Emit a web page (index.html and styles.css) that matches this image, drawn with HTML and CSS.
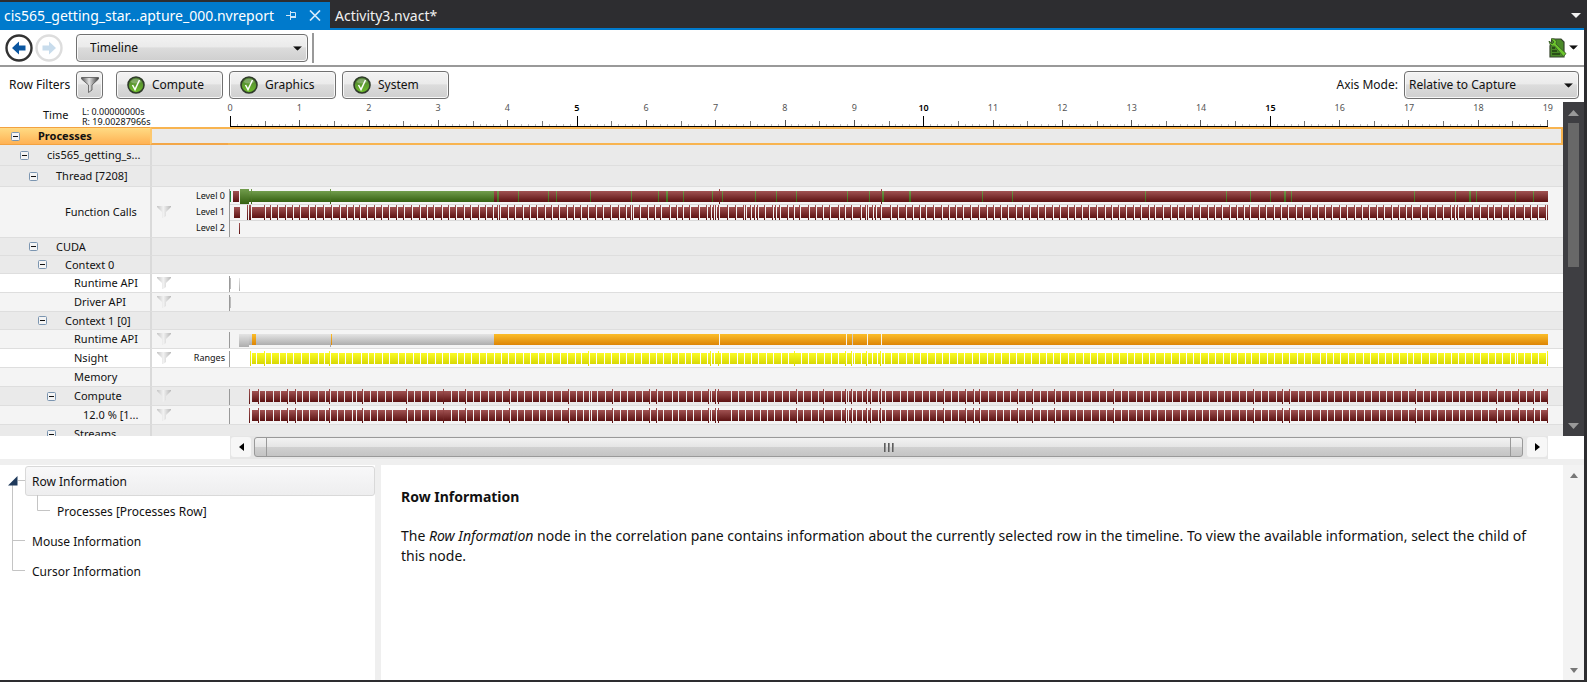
FILE: index.html
```
<!DOCTYPE html>
<html lang="en">
<head>
<meta charset="utf-8">
<title>Nsight Timeline</title>
<link rel="stylesheet" href="styles.css">
</head>
<body>
<svg class="defs" width="0" height="0" aria-hidden="true">
  <defs>
    <linearGradient id="g-red" x1="0" y1="0" x2="0" y2="1"><stop offset="0" stop-color="#a05252"/><stop offset="1" stop-color="#5c1212"/></linearGradient>
    <linearGradient id="g-green" x1="0" y1="0" x2="0" y2="1"><stop offset="0" stop-color="#729d4d"/><stop offset="1" stop-color="#356011"/></linearGradient>
    <linearGradient id="g-orange" x1="0" y1="0" x2="0" y2="1"><stop offset="0" stop-color="#fbbd28"/><stop offset="1" stop-color="#dd8506"/></linearGradient>
    <linearGradient id="g-yellow" x1="0" y1="0" x2="0" y2="1"><stop offset="0" stop-color="#fbfb24"/><stop offset="1" stop-color="#d8d804"/></linearGradient>
    <linearGradient id="g-grey" x1="0" y1="0" x2="0" y2="1"><stop offset="0" stop-color="#e4e4e4"/><stop offset="1" stop-color="#adadad"/></linearGradient>
    <linearGradient id="g-ball" x1="0" y1="0" x2="0" y2="1"><stop offset="0" stop-color="#4d7a34"/><stop offset="1" stop-color="#6fc02a"/></linearGradient>
    <linearGradient id="g-funnel" x1="0" y1="0" x2="1" y2="0"><stop offset="0" stop-color="#555"/><stop offset=".45" stop-color="#e2e2e2"/><stop offset="1" stop-color="#3c3c3c"/></linearGradient>
    <linearGradient id="g-funnel-dim" x1="0" y1="0" x2="1" y2="0"><stop offset="0" stop-color="#c4c4c4"/><stop offset=".45" stop-color="#f2f2f2"/><stop offset="1" stop-color="#b8b8b8"/></linearGradient>
    <symbol id="funnel" viewBox="0 0 14 12"><path d="M0 0H14V1L9 6V10L6 12H5V6L0 1Z" fill="url(#g-funnel-dim)"/></symbol>
    <symbol id="check" viewBox="0 0 18 18"><circle cx="9" cy="9" r="8" fill="url(#g-ball)" stroke="#2f3a2a" stroke-width="1.6"/><path d="M3.5 6a6.2 6.2 0 0 1 11 0Q9 9 3.500 6Z" fill="#fff" opacity=".25"/><path d="M5.500 9L8 13.500L12.500 4" fill="none" stroke="#fff" stroke-width="1.500"/></symbol>
    <symbol id="caret" viewBox="0 0 10 5"><path d="M0 0H10L5 5Z" fill="currentColor"/></symbol>
  </defs>
</svg>

<div class="window">
  <nav class="tabs">
    <div class="tab active">
      <a href="#report">cis565_getting_star...apture_000.nvreport</a>
      <button class="plain" aria-label="Pin tab"><svg width="11" height="9" viewBox="0 0 11 9"><path d="M0 4.500H4M4.500 0V9M4.500 1.500H9.500V6M4.500 6.500H10" fill="none" stroke="#cfe6f7" stroke-width="1"/><path d="M4.500 5.500H10" stroke="#cfe6f7" stroke-width="1"/></svg></button>
      <button class="plain close" aria-label="Close tab"><svg width="12" height="11" viewBox="0 0 12 11"><path d="M1 .5L11 10.500M11 .5L1 10.500" stroke="#d5eafa" stroke-width="1.700"/></svg></button>
    </div>
    <div class="tab"><a href="#activity">Activity3.nvact*</a></div>
    <button class="plain tab-menu" aria-label="Open documents"><svg width="10" height="5"><use href="#caret"/></svg></button>
  </nav>

  <main class="client">
    <div class="toolbar">
      <button class="plain nav" aria-label="Back"><svg width="28" height="28" viewBox="0 0 28 28"><circle cx="14" cy="14" r="12.500" fill="#fff" stroke="#333" stroke-width="2.400"/><path d="M7 14L14 7.500V11.500H20.500V16.500H14V20.500Z" fill="#0a56a0"/></svg></button>
      <button class="plain nav" aria-label="Forward" disabled><svg width="28" height="28" viewBox="0 0 28 28"><circle cx="14" cy="14" r="12.500" fill="#fff" stroke="#ddd" stroke-width="2.400"/><path d="M21 14L14 7.500V11.500H7.500V16.500H14V20.500Z" fill="#c8dcec"/></svg></button>
      <div class="select page-select">
        <select aria-label="Report page"><option>Timeline</option></select>
        <svg width="9" height="5" viewBox="0 0 10 5"><use href="#caret"/></svg>
      </div>
      <span class="divider"></span>
      <button class="plain tools" aria-label="Report tools">
        <svg width="19" height="20" viewBox="0 0 19 20"><path d="M4 1H13L16 4V19H2V8Z" fill="#4a8a28" stroke="#35452c" stroke-width="1.200"/><path d="M4 13H9M4 16H12M4 10H7" stroke="#1f3d10" stroke-width="1.300"/><path d="M1 3L4 6L6 4L3 1Q7 0 8.500 3.500L8 6L18 15.500L15.500 18.500L6.500 8Q2 9 1 3Z" fill="#6cc62c" stroke="#3b5d28" stroke-width=".9"/></svg>
        <svg width="9" height="5" viewBox="0 0 10 5"><use href="#caret"/></svg>
      </button>
    </div>

    <div class="filters">
      <span class="filters-label">Row Filters</span>
      <button class="btn funnel-btn" aria-label="Filter rows"><svg width="18" height="16" viewBox="0 0 18 16"><path d="M.5 .5H17.500V2L11 8V13L7.500 15.500V8L.5 2Z" fill="url(#g-funnel)" stroke="#555" stroke-width=".8"/></svg></button>
      <div class="filter-group">
        <button class="btn"><svg width="18" height="18"><use href="#check"/></svg>Compute</button>
        <button class="btn"><svg width="18" height="18"><use href="#check"/></svg>Graphics</button>
        <button class="btn"><svg width="18" height="18"><use href="#check"/></svg>System</button>
      </div>
      <label class="axis-label" for="axis">Axis Mode:</label>
      <div class="select axis-select">
        <select id="axis"><option>Relative to Capture</option></select>
        <svg width="9" height="5" viewBox="0 0 10 5"><use href="#caret"/></svg>
      </div>
    </div>

    <section class="timeline">
      <div class="timeline-body">
        <div class="ruler">
          <span class="time-label">Time</span>
          <span class="time-range">L: 0.00000000s<br>R: 19.00287966s</span>
          <div class="scale">
            <div class="scale-labels" id="scale-labels"></div>
            <svg class="ticks" data-track="ruler" viewBox="0 0 1319 12" preserveAspectRatio="none"></svg>
          </div>
        </div>
        <div class="rows" id="rows"></div>
      </div>
      <div class="vscroll dark">
        <button class="plain" aria-label="Scroll up"><svg width="11" height="6" viewBox="0 0 11 6"><path d="M5.500 0L11 6H0Z" fill="#999"/></svg></button>
        <span class="vthumb"></span>
        <button class="plain" aria-label="Scroll down"><svg width="11" height="6" viewBox="0 0 11 6"><path d="M5.500 6L11 0H0Z" fill="#999"/></svg></button>
      </div>
    </section>

    <div class="hscroll">
      <button class="plain hbtn" aria-label="Scroll left"><svg width="5" height="8" viewBox="0 0 5 8"><path d="M0 4L5 0V8Z" fill="#000"/></svg></button>
      <div class="hthumb"><span class="cap"></span><span class="mid"><i></i><i></i><i></i></span><span class="cap"></span></div>
      <button class="plain hbtn" aria-label="Scroll right"><svg width="5" height="8" viewBox="0 0 5 8"><path d="M5 4L0 0V8Z" fill="#000"/></svg></button>
    </div>

    <section class="details">
      <div class="tree">
        <svg class="tree-lines" width="56" height="112" viewBox="0 0 56 112" aria-hidden="true"><path d="M18 15.500H25M12.500 20V105.500M12.500 75.500H25M12.500 105.500H25M37.500 30V45.500H50" fill="none" stroke="#c4c4c4"/><path d="M8 20.500H17.500V11Z" fill="#1e395b"/></svg>
        <a class="node selected" href="#row">Row Information</a>
        <a class="node child" href="#processes">Processes [Processes Row]</a>
        <a class="node" href="#mouse">Mouse Information</a>
        <a class="node" href="#cursor">Cursor Information</a>
      </div>
      <article class="doc">
        <h1>Row Information</h1>
        <p>The <em>Row Information</em> node in the correlation pane contains information about the currently selected row in the timeline. To view the available information, select the child of this node.</p>
      </article>
      <div class="vscroll light">
        <button class="plain" aria-label="Scroll up"><svg width="8" height="5" viewBox="0 0 8 5"><path d="M4 0L8 5H0Z" fill="#777"/></svg></button>
        <button class="plain" aria-label="Scroll down"><svg width="8" height="5" viewBox="0 0 8 5"><path d="M4 5L8 0H0Z" fill="#777"/></svg></button>
      </div>
    </section>
  </main>
</div>
<script src="timeline.js"></script>
</body>
</html>
```
FILE: styles.css
```
* { box-sizing: border-box; }

body {
  margin: 0;
  font: 12px/16px "Noto Sans", "Open Sans", sans-serif;
  color: #111;
  background: #2d2d30;
}

.defs { position: absolute; }
a { color: inherit; text-decoration: none; }
svg { display: block; flex: none; }

button, select { font: inherit; color: inherit; }
.plain {
  display: flex;
  align-items: center;
  justify-content: center;
  padding: 0;
  border: 0;
  background: none;
}

.window {
  display: flex;
  flex-direction: column;
  height: 100vh;
  padding: 0 3px 2px 0;
}

/* Document tabs */
.tabs {
  display: flex;
  align-items: stretch;
  height: 30px;
  padding-top: 2px;
  border-bottom: 2px solid #007acc;
  color: #f1f1f1;
  font-size: 14px;
  line-height: 28px;
}
.tab { display: flex; padding: 0 5px; }
.tab.active { gap: 12px; padding: 0 9px 0 4px; background: #007acc; color: #fff; }
.tab-menu { margin-left: auto; padding-right: 3px; color: #f1f1f1; }

.client {
  display: flex;
  flex: 1;
  flex-direction: column;
  min-height: 0;
  background: #fff;
}

/* Toolbar */
.toolbar {
  display: flex;
  align-items: center;
  height: 37px;
  padding: 0 6px 0 4px;
  border-bottom: 2px solid #999;
}
.nav { width: 30px; }
.divider { width: 2px; height: 30px; margin-left: 4px; background: #999; }
.tools { gap: 2px; margin-left: auto; }

.select { position: relative; }
.select select {
  width: 100%;
  height: 28px;
  border: 1px solid #707070;
  border-radius: 4px;
  background: linear-gradient(#f3f3f3, #ebebeb 45%, #dcdcdc 50%, #cfcfcf);
  box-shadow: inset 0 0 0 1px #f8f8f8;
  appearance: none;
}
.select svg { position: absolute; top: 12px; right: 6px; pointer-events: none; }
.page-select { width: 232px; margin-left: 12px; }
.page-select select { padding: 0 13px; }
.axis-select { width: 175px; }
.axis-select select { padding: 0 4px; }

/* Row filters */
.filters {
  display: flex;
  align-items: center;
  height: 35px;
  padding: 0 5px 0 9px;
}
.filters-label { width: 67px; }
.btn {
  display: flex;
  align-items: center;
  gap: 7px;
  width: 107px;
  height: 28px;
  padding: 0 10px;
  border: 1px solid #707070;
  border-radius: 4px;
  background: linear-gradient(#f3f3f3, #ebebeb 45%, #dcdcdc 50%, #cfcfcf);
  box-shadow: inset 0 0 0 1px #f8f8f8;
}
.funnel-btn { justify-content: center; width: 27px; padding: 0; }
.filter-group { display: flex; gap: 6px; margin-left: 13px; }
.axis-label { margin: 0 6px 0 auto; }

/* Timeline */
.timeline { display: flex; flex: 1; min-height: 0; }
.timeline-body { display: flex; flex: 1; flex-direction: column; min-width: 0; }
.ruler { display: flex; height: 25px; padding-right: 15px; }
.time-label { width: 82px; padding-left: 43px; font-size: 11px; line-height: 26px; }
.time-range { width: 147px; padding-top: 5px; font-size: 9px; line-height: 10px; }
.scale { display: flex; flex: 1; flex-direction: column; min-width: 0; }
.scale-labels {
  display: flex;
  justify-content: space-between;
  height: 13px;
  padding-left: 1px;
  color: #555;
  font-size: 9px;
  line-height: 11px;
}
.scale-labels span { display: flex; justify-content: center; width: 0; }
.scale-labels .strong { color: #000; font-weight: 600; }
.ticks { width: 100%; height: 12px; }

.rows { flex: 1; overflow: hidden; font-size: 11px; }
.row {
  display: grid;
  grid-template-columns: 150px 78px 1fr;
  height: 19px;
  background: #f4f4f4;
}
.row.head { background: #eaeaea; }
.row.white { background: #fff; }
.row.short { height: 18px; }
.row.tall { height: 21px; }
.row.calls { height: 51px; }
.name {
  display: flex;
  align-items: center;
  gap: 18px;
  border-bottom: 1px solid #dedede;
  white-space: nowrap;
}
.name.d0 { padding-left: 11px; }
.name.d1 { padding-left: 20px; }
.name.d2 { padding-left: 29px; }
.name.d3 { padding-left: 38px; }
.name.d4 { padding-left: 47px; }
.name.d5 { padding-left: 56px; }
.toggle { flex: none; width: 9px; height: 9px; }
.gutter {
  display: flex;
  align-items: center;
  justify-content: space-between;
  padding: 0 3px 0 5px;
  border-left: 2px solid #dadada;
  border-bottom: 1px solid #dedede;
  font-size: 9px;
  line-height: 16px;
  text-align: right;
}
.track {
  min-width: 0;
  padding: 0 15px 0 1px;
  border-bottom: 1px solid #dedede;
}
.track svg { width: 100%; height: 18px; }
.calls .track svg { height: 50px; }
.row.current .name {
  border-top: 1px solid #f3a240;
  border-bottom: 1px solid #f3a240;
  background: linear-gradient(#ffdb84, #ffb254);
  font-weight: 700;
}
.row.current .gutter {
  border-top: 2px solid #f8b450;
  border-bottom: 2px solid #f3a748;
  border-left: 2px solid #fdc86e;
}
.row.current .track {
  border: solid #f8b450;
  border-width: 2px 2px 2px 0;
}

/* Scroll bars */
.vscroll { display: flex; flex: none; flex-direction: column; width: 21px; }
.dark { background: #3e3e42; }
.dark button { height: 21px; }
.dark button:last-child { margin-top: auto; }
.vthumb { width: 11px; height: 47%; min-height: 0; margin: 0 5px; flex: 0 1 144px; background: #686868; }
.light { justify-content: space-between; background: #f3f3f3; }
.light button { height: 20px; }

.hscroll {
  display: flex;
  height: 23px;
  margin: 0 36px 0 230px;
  border: solid #e6e6e6;
  border-width: 1px 1px 2px;
  background: #e6e6e6;
}
.hbtn { width: 20px; border-radius: 3px; background: #f7f7f7; }
.hthumb {
  display: flex;
  flex: 1;
  margin: 0 4px 0 3px;
  border: 1px solid #999;
  border-radius: 3px;
  background: linear-gradient(#f2f2f2, #e5e5e5 49%, #d0d0d0 51%, #c4c4c4);
}
.cap { width: 11px; }
.mid { display: flex; flex: 1; align-items: center; justify-content: center; gap: 2px; border: solid #999; border-width: 0 1px; }
.mid i { width: 2px; height: 9px; background: linear-gradient(90deg, #444, #aaa); }

/* Details */
.details { display: flex; height: 221px; border-top: 6px solid #efefef; }
.tree {
  position: relative;
  display: flex;
  flex-direction: column;
  width: 381px;
  padding-top: 1px;
  border-right: 6px solid #efefef;
}
.tree-lines { position: absolute; top: 0; left: 0; }
.node { height: 30px; margin-left: 25px; padding: 0 6px; border: 1px solid transparent; line-height: 30px; }
.node.child { margin-left: 50px; }
.node.selected { border-color: #d9d9d9; border-radius: 3px; background: linear-gradient(#f8f8f9, #eeeeef); }
.doc { flex: 1; min-width: 0; padding: 22px 20px; font-size: 14px; line-height: 20px; }
.doc h1 { margin: 0 0 19px; font-size: 14px; line-height: 20px; }
.doc p { margin: 0; }
```
FILE: timeline.js
```
// Track coordinates: x = 0 is the row axis, x = 1319 is the end of the capture.
const ORIGIN = 229;
const END = 1319;
const at = (base, unit, list) => list.map(v => Math.floor(base + v / unit) - ORIGIN);

const rect = (x, y, w, h, fill) => `<rect x="${x}" y="${y}" width="${w}" height="${h}" fill="${fill}"/>`;
const axis = h => rect(0, 2, 1, h - 2, '#999');

// Call ends on level 1 of the function call row.
const callEnds = [
  ...at(0, 3, [794, 811, 832, 857, 878, 899, 926, 947, 971, 995, 1017, 1038, 1059, 1077, 1098, 1122, 1143, 1164, 1188]),
  ...at(400, 3, [10, 34, 58, 79, 100, 124, 145, 166, 190, 211, 235, 256, 277, 292, 298, 322, 343, 367, 388, 409, 433, 454, 475, 499, 520, 541, 562, 586, 607, 631, 655, 676, 691, 697, 718, 742, 763, 781, 808, 829, 847, 868, 895, 919, 931, 940, 946, 955, 982, 1006, 1030, 1036, 1051, 1063, 1072, 1093, 1117, 1126, 1138, 1162, 1180, 1198, 1225, 1246]),
  ...at(820, 3, [7, 28, 55, 73, 94, 121, 136, 142, 157, 166, 181, 211, 232, 256, 277, 298, 316, 340, 363, 385, 406, 427, 451, 475, 499, 520, 541, 562, 586, 607, 628, 652, 673, 697, 718, 742, 763, 784, 805, 829, 853, 874, 895, 916, 940, 961, 985, 1003, 1027, 1051, 1072, 1093, 1117, 1138, 1162, 1183, 1204, 1228]),
  ...at(1230, 3, [19, 40, 58, 85, 106, 130, 151, 172, 196, 217, 241, 262, 283, 304, 328, 349, 373, 394, 415, 439, 460, 484, 505, 526, 544, 571, 592, 616, 637, 661, 673, 682, 703, 727, 748, 772, 790, 814, 835, 853, 880, 901, 922, 946, 952])
];

// Gaps between ranges and between kernels.
const rangeGaps = [
  ...at(0, 3, [770, 795, 813, 838, 860, 880, 903, 928, 955, 973, 990, 1016, 1036, 1057, 1084, 1105, 1123, 1147, 1168, 1195]),
  ...at(400, 2.8, [15, 37, 57, 76, 98, 119, 138, 160, 180, 200, 222, 243, 264, 284, 303, 324, 345, 366, 387, 407, 428, 449, 469, 491, 508, 530, 551, 572, 592, 614, 634, 656, 677, 698, 717, 738, 759, 779, 799, 816, 841, 862, 872, 880, 893, 900, 922, 944, 964, 984, 1003, 1026, 1047, 1068, 1088, 1105, 1124, 1145, 1166, 1188, 1208, 1229, 1250, 1266, 1272, 1293, 1310, 1324, 1337, 1347, 1357, 1376, 1397, 1418, 1438, 1456, 1476, 1498, 1518, 1538]),
  ...at(955, 3, [7, 28, 52, 73, 97, 118, 139, 163, 184, 208, 229, 253, 274, 295, 316, 340, 361, 385, 406, 427, 451, 472, 493, 517, 538, 562, 583, 601, 628, 649, 673, 694, 715, 736, 760, 781, 805, 826]),
  ...at(1230, 3, [22, 46, 64, 88, 112, 133, 157, 179, 202, 223, 245, 270, 290, 311, 331, 355, 376, 400, 421, 445, 467, 487, 509, 531, 550, 574, 598, 622, 643, 664, 686, 706, 730, 751, 775, 796, 817, 841, 856, 861, 883, 904, 925, 949])
];
const rangeMarks = [...at(0, 3, [752, 794, 989]), ...at(400, 2.8, [528, 869, 891, 1104, 1247, 1265, 1306, 1345]), ...at(1230, 3, [952])];
const kernelGaps = [
  ...at(0, 3, [778, 797, 821, 842, 864, 888, 907, 927, 954, 976, 991, 1012, 1033, 1057, 1069, 1090, 1111, 1132, 1156, 1177]),
  ...at(400, 2.8, [20, 41, 60, 82, 102, 122, 144, 163, 185, 205, 226, 247, 268, 287, 308, 329, 348, 370, 390, 410, 431, 453, 474, 494, 514, 531, 537, 552, 575, 597, 617, 638, 659, 680, 701, 720, 739, 762, 781, 802, 823, 844, 866, 871, 886, 893, 928, 947, 967, 989, 1009, 1029, 1048, 1070, 1090, 1112, 1131, 1152, 1173, 1188, 1213, 1235, 1250, 1255, 1267, 1277, 1296, 1309, 1320, 1340, 1348, 1359, 1380, 1401, 1420, 1441, 1462, 1482, 1503, 1524, 1543]),
  ...at(955, 3, [10, 34, 58, 76, 100, 124, 145, 166, 190, 211, 235, 256, 277, 301, 319, 343, 364, 385, 409, 433, 454, 478, 499, 520, 544, 565, 586, 607, 631, 652, 676, 697, 721, 742, 763, 787, 808]),
  ...at(1230, 3, [4, 28, 49, 73, 94, 115, 139, 160, 181, 205, 226, 247, 271, 292, 313, 337, 358, 379, 403, 424, 448, 469, 490, 514, 535, 559, 580, 601, 622, 646, 667, 688, 706, 730, 754, 775, 802, 823, 844, 868, 889, 913, 931])
];
const kernelMarks = [
  ...at(0, 3, [748, 775, 862, 886, 988, 1087]),
  ...at(400, 2.8, [18, 121, 183, 306, 471, 595, 698, 718, 864, 884, 891, 1110, 1186, 1247, 1264, 1306, 1317, 1345, 1522]),
  ...at(955, 3, [31, 55, 73, 187, 232, 298, 475]),
  ...at(1230, 3, [71, 157, 178, 556, 799, 865, 910, 952])
];

function blocks(gaps, start, y, fill) {
  let out = '', from = start;
  for (const gap of [...gaps, END]) {
    if (gap > from) out += rect(from, y, gap - from, 11, fill);
    from = gap + 1;
  }
  return out;
}
const marks = (list, y, fill) => list.map(x => rect(x, y, 1, 15, fill)).join('');

function ruler() {
  let out = rect(1, 11, 1318, 1, '#000');
  for (let i = 0; i <= 190; i++) {
    const x = Math.min(1 + Math.round(i * 6.932), 1318);
    if (i % 50 === 0) out += rect(x, 1, 1, 11, '#000');
    else if (i % 10 === 0) out += rect(x, 5, 1, 6, '#555');
    else if (i % 5 === 0) out += rect(x, 6, 1, 5, '#777');
    else out += rect(x, 9, 1, 2, '#bbb');
  }
  return out;
}

function calls() {
  const red = 'url(#g-red)', green = 'url(#g-green)';
  let out = rect(0, 17, END, 1, '#dadada') + rect(0, 33, END, 1, '#dadada') + axis(50);
  out += rect(1, 4, 1, 11, '#1e8a3c') + rect(4, 4, 6, 11, red);
  out += rect(20, 4, 245, 11, green) + rect(265, 4, 1054, 11, red) + rect(11, 2, 9, 15, green);
  out += marks([22, 101], 2, green) + marks([490, 652], 2, red);
  for (const x of at(400, 3, [355, 445, 469, 571, 694, 775, 850, 937, 967, 1066, 1129, 1189])) out += rect(x, 4, 1, 11, green);
  for (const x of at(820, 3, [82, 148, 487, 577, 976, 1219])) out += rect(x, 4, 1, 11, green);
  for (const x of at(1230, 3, [61, 121, 184, 553, 676, 739, 856, 910])) out += rect(x, 4, 1, 11, green);
  for (const x of [268, 437, 653, 680, 1055, 1240]) out += rect(x, 4, 2, 11, green);
  out += rect(5, 20, 6, 11, red) + blocks(callEnds.map(x => x + 1), 23, 20, red);
  out += marks([18, 20, 21, ...callEnds], 18, red);
  return out + rect(10, 36, 1, 11, red);
}

function runtime() {
  const orange = 'url(#g-orange)', grey = 'url(#g-grey)';
  let out = axis(18) + rect(20, 4, 245, 11, grey) + rect(10, 4, 10, 13, grey);
  out += rect(23, 4, 4, 11, orange) + rect(102, 4, 1, 11, orange) + rect(101, 15, 1, 2, '#aaa') + rect(265, 4, 1054, 11, orange);
  for (const x of [490, 617, 638, 652]) out += rect(x, 4, 1, 11, '#f8f4ea');
  return out + rect(623, 4, 1, 11, '#ccc');
}

const kernels = () => axis(18) + blocks(kernelGaps, 23, 4, 'url(#g-red)') + marks(kernelMarks, 2, 'url(#g-red)');
const tracks = {
  ruler,
  calls,
  runtime,
  kernels,
  early: () => axis(18) + rect(1, 4, 1, 11, '#bbb') + rect(10, 4, 1, 13, 'url(#g-grey)'),
  start: () => axis(18) + rect(1, 4, 1, 11, '#bbb'),
  ranges: () => axis(18) + blocks(rangeGaps, 23, 4, 'url(#g-yellow)') + marks(rangeMarks, 2, 'url(#g-yellow)')
};

const rows = [
  { name: 'Processes', depth: 0, cls: 'head short current', open: true },
  { name: 'cis565_getting_s...', depth: 1, cls: 'head tall', open: true },
  { name: 'Thread [7208]', depth: 2, cls: 'head tall', open: true },
  { name: 'Function Calls', depth: 3, cls: 'calls', filter: true, lanes: ['Level 0', 'Level 1', 'Level 2'], track: 'calls' },
  { name: 'CUDA', depth: 2, cls: 'head short', open: true },
  { name: 'Context 0', depth: 3, cls: 'head short', open: true },
  { name: 'Runtime API', depth: 4, cls: 'white', filter: true, track: 'early' },
  { name: 'Driver API', depth: 4, cls: '', filter: true, track: 'start' },
  { name: 'Context 1 [0]', depth: 3, cls: 'head short', open: true },
  { name: 'Runtime API', depth: 4, cls: '', filter: true, track: 'runtime' },
  { name: 'Nsight', depth: 4, cls: 'white', filter: true, lanes: ['Ranges'], track: 'ranges' },
  { name: 'Memory', depth: 4, cls: '' },
  { name: 'Compute', depth: 4, cls: 'head', open: true, filter: true, track: 'kernels' },
  { name: '12.0 % [1...', depth: 5, cls: '', filter: true, track: 'kernels' },
  { name: 'Streams', depth: 4, cls: 'head', open: true }
];

const toggle = '<button class="plain toggle" aria-label="Collapse"><svg width="9" height="9" viewBox="0 0 9 9"><rect x=".5" y=".5" width="8" height="8" rx="1" fill="#f4f4f4" stroke="#7b95b0"/><path d="M2 4.500H7" stroke="#111"/></svg></button>';
const funnel = '<button class="plain" aria-label="Filter row"><svg width="14" height="12"><use href="#funnel"/></svg></button>';

document.getElementById('rows').innerHTML = rows.map(r => `
  <div class="row ${r.cls}">
    <div class="name d${r.depth}">${r.open ? toggle : '<span class="toggle"></span>'}<span>${r.name}</span></div>
    <div class="gutter">${r.filter ? funnel : ''}${r.lanes ? `<div>${r.lanes.join('<br>')}</div>` : ''}</div>
    <div class="track">${r.track ? `<svg data-track="${r.track}" viewBox="0 0 1319 ${r.track === 'calls' ? 50 : 18}" preserveAspectRatio="none"></svg>` : ''}</div>
  </div>`).join('');

for (const svg of document.querySelectorAll('[data-track]')) {
  svg.setAttribute('shape-rendering', 'crispEdges');
  svg.innerHTML = tracks[svg.dataset.track]();
}

document.getElementById('scale-labels').innerHTML = Array.from({ length: 20 }, (_, i) =>
  `<span${i % 5 === 0 && i ? ' class="strong"' : ''}>${i}</span>`).join('');
```
